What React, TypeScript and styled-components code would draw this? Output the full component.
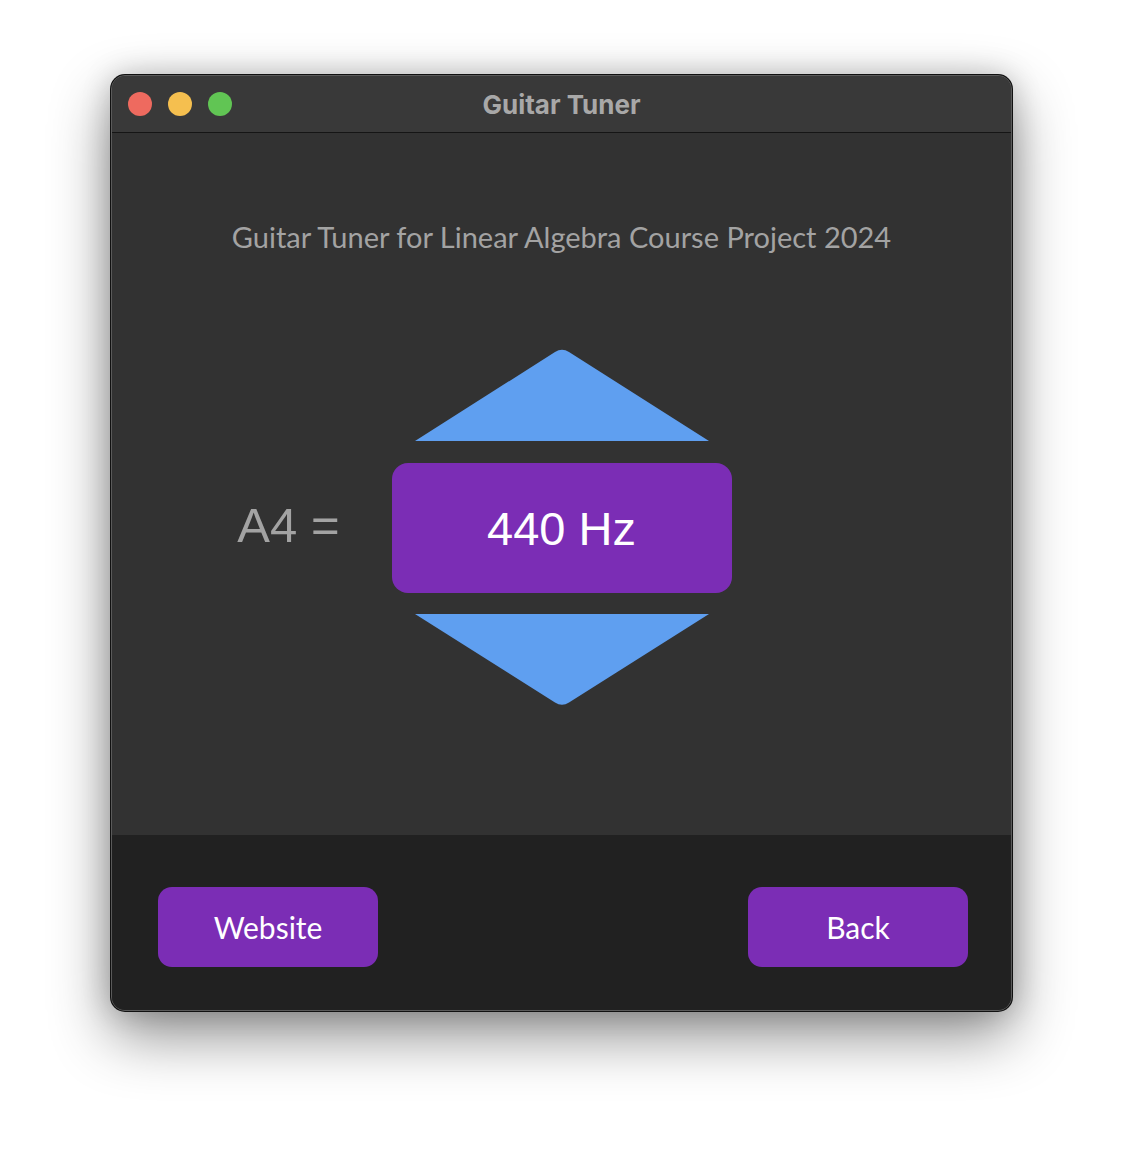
import React, { useState } from 'react';
import styled, { createGlobalStyle } from 'styled-components';

const GlobalStyle = createGlobalStyle`
    html, body {
        margin: 0;
        padding: 0;
        background: #ffffff;
    }
`;

export default function App() {
    const [freq, setFreq] = useState(440);

    return (
        <Page>
            <GlobalStyle />
            <Window>
                <TitleBar>
                    <Lights>
                        <Light color="#ee6a5f" />
                        <Light color="#f5bf4f" />
                        <Light color="#61c554" />
                    </Lights>
                    <Title>Guitar Tuner</Title>
                </TitleBar>
                <Content>
                    <Subtitle>Guitar Tuner for Linear Algebra Course Project 2024</Subtitle>
                    <TunerRow>
                        <NoteLabel>A4 =</NoteLabel>
                        <Controls>
                            <ArrowButton type="button" onClick={() => setFreq(freq + 1)}>
                                <svg width="294" height="92" viewBox="0 0 294 92">
                                    <path d="M0 92 L140 3 Q147 -1.5 154 3 L294 92 Z" fill="#5f9ff0" />
                                </svg>
                            </ArrowButton>
                            <FreqBox>{freq} Hz</FreqBox>
                            <ArrowButton type="button" onClick={() => setFreq(freq - 1)}>
                                <svg width="294" height="92" viewBox="0 0 294 92">
                                    <path d="M0 0 L140 88.5 Q147 93 154 88.5 L294 0 Z" fill="#5f9ff0" />
                                </svg>
                            </ArrowButton>
                        </Controls>
                        <div />
                    </TunerRow>
                </Content>
                <Footer>
                    <FooterButton type="button">Website</FooterButton>
                    <FooterButton type="button">Back</FooterButton>
                </Footer>
            </Window>
        </Page>
    );
}

const Page = styled.div`
    width: 1124px;
    height: 1160px;
    display: flex;
    justify-content: center;
    padding-top: 75px;
    box-sizing: border-box;
`;

const Window = styled.div`
    width: 901px;
    height: 936px;
    margin-right: 1px;
    border-radius: 14px;
    overflow: hidden;
    display: flex;
    flex-direction: column;
    background: #323232;
    border: 1px solid #5a5a5a;
    box-sizing: border-box;
    box-shadow: 0 0 0 1px #111, 0 24px 60px rgba(0, 0, 0, 0.45), 0 0 30px rgba(0, 0, 0, 0.2);
`;

const TitleBar = styled.div`
    height: 56px;
    flex-shrink: 0;
    background: #393939;
    border-bottom: 1px solid #151515;
    display: flex;
    align-items: center;
    position: relative;
`;

const Lights = styled.div`
    display: flex;
    gap: 16px;
    padding-left: 16px;
`;

const Light = styled.span<{ color: string }>`
    width: 24px;
    height: 24px;
    border-radius: 50%;
    background: ${(p) => p.color};
`;

const Title = styled.div`
    position: absolute;
    left: 0;
    right: 0;
    text-align: center;
    font-family: Inter, "Liberation Sans", sans-serif;
    font-weight: 700;
    font-size: 26px;
    color: #a8a8a8;
    pointer-events: none;
`;

const Content = styled.div`
    flex: 1;
    display: flex;
    flex-direction: column;
    align-items: center;
    background: #323232;
`;

const Subtitle = styled.div`
    margin-top: 88px;
    font-family: Lato, "Liberation Sans", sans-serif;
    font-size: 29px;
    color: #a3a3a3;
    line-height: 32px;
`;

const TunerRow = styled.div`
    margin-top: 96px;
    width: 100%;
    display: grid;
    grid-template-columns: 1fr 340px 1fr;
    align-items: center;
`;

const NoteLabel = styled.div`
    justify-self: end;
    margin-right: 52px;
    margin-top: -6px;
    font-family: "Liberation Sans", sans-serif;
    font-size: 49px;
    color: #a3a3a3;
`;

const Controls = styled.div`
    display: flex;
    flex-direction: column;
    align-items: center;
`;

const ArrowButton = styled.button`
    border: none;
    padding: 0;
    background: none;
    cursor: pointer;
    display: block;
    line-height: 0;
`;

const FreqBox = styled.div`
    width: 340px;
    height: 130px;
    margin: 22px 0 21px;
    border-radius: 16px;
    background: #7b2db5;
    color: #ffffff;
    display: flex;
    align-items: center;
    justify-content: center;
    font-family: "Liberation Sans", sans-serif;
    font-size: 47px;
`;

const Footer = styled.div`
    height: 175px;
    flex-shrink: 0;
    background: #212121;
    display: flex;
    justify-content: space-between;
    align-items: flex-start;
    padding: 52px 43px 0 46px;
    box-sizing: border-box;
`;

const FooterButton = styled.button`
    width: 220px;
    height: 80px;
    border: none;
    border-radius: 14px;
    background: #7b2db5;
    color: #ffffff;
    font-family: Lato, "Liberation Sans", sans-serif;
    font-size: 30px;
    cursor: pointer;
`;
